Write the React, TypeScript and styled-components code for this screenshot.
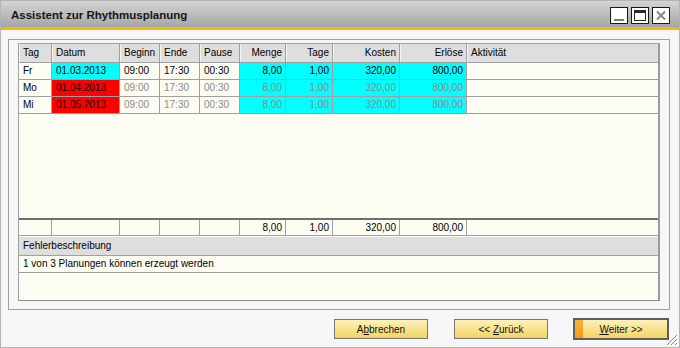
import React from "react";
import styled, { createGlobalStyle } from "styled-components";

const GlobalStyle = createGlobalStyle`
  html, body {
    margin: 0;
    padding: 0;
    background: #ffffff;
  }
  * {
    box-sizing: border-box;
  }
`;

const COLS = "33px 68px 40px 40px 40px 46px 47px 67px 67px 1fr";
const LINE = "#a0a0a0";
const CREAM = "#fdfdf3";

const Window = styled.div`
  position: relative;
  width: 680px;
  height: 348px;
  border: 1px solid #b4b4b4;
  background: #f6f6f6;
  display: flex;
  flex-direction: column;
  font-family: "Liberation Sans", Arial, sans-serif;
  font-size: 10px;
  color: #000;
`;

const TitleBar = styled.div`
  height: 26px;
  flex: none;
  display: flex;
  align-items: center;
  justify-content: space-between;
  padding: 0 9px 0 10px;
  background: linear-gradient(#d4d4d4, #a6a6a6);
  border-bottom: 3px solid #f7b80c;
  box-sizing: content-box;
`;

const Title = styled.div`
  font-size: 11.5px;
  font-weight: bold;
  color: #161616;
  padding-top: 1px;
`;

const TitleButtons = styled.div`
  display: flex;
  gap: 3px;
  padding-top: 2px;
`;

const TitleButton = styled.div`
  width: 18px;
  height: 17px;
  border: 1px solid #1a1a1a;
  background: #fff;
  display: flex;
  align-items: center;
  justify-content: center;
`;

const Body = styled.div`
  flex: 1;
  display: flex;
  flex-direction: column;
  padding: 9px 9px 0 7px;
`;

const Frame = styled.div`
  border: 1px solid ${LINE};
  padding: 3px 9px 8px 9px;
`;

const Grid = styled.div`
  height: 258px;
  background: ${CREAM};
  border-top: 1px solid ${LINE};
  border-left: 1px solid ${LINE};
  border-right: 2px solid #9a9a9a;
  border-bottom: 1px solid #8c8c8c;
  display: flex;
  flex-direction: column;
`;

const HeaderRow = styled.div`
  display: grid;
  grid-template-columns: ${COLS};
  height: 19px;
  flex: none;
  background: #dedede;
  border-bottom: 1px solid ${LINE};
`;

const HeaderCell = styled.div<{ $right?: boolean }>`
  padding: 0 3px 0 4px;
  line-height: 18px;
  text-align: ${(p) => (p.$right ? "right" : "left")};
  border-right: 1px solid ${LINE};
  box-shadow: inset 1px 0 0 #f4f4f4;
  white-space: nowrap;
  overflow: hidden;
  &:last-child {
    border-right: none;
  }
`;

const Row = styled.div<{ $h?: number }>`
  display: grid;
  grid-template-columns: ${COLS};
  height: ${(p) => p.$h ?? 17}px;
  flex: none;
  border-bottom: 1px solid ${LINE};
`;

const Cell = styled.div<{ $right?: boolean; $bg?: string; $dim?: boolean }>`
  padding: 0 3px 0 4px;
  line-height: 16px;
  text-align: ${(p) => (p.$right ? "right" : "left")};
  background: ${(p) => p.$bg ?? "transparent"};
  color: ${(p) => (p.$dim ? "#8a8a8a" : "#000")};
  border-right: 1px solid ${LINE};
  white-space: nowrap;
  &:last-child {
    border-right: none;
  }
`;

const Filler = styled.div<{ $h: number }>`
  height: ${(p) => p.$h}px;
  flex: none;
`;

const Separator = styled.div`
  height: 2px;
  flex: none;
  background: #6e6e6e;
`;

const Gap = styled.div`
  height: 1px;
  flex: none;
  background: #ffffff;
`;

const SectionHeader = styled.div`
  height: 19px;
  flex: none;
  background: #dedede;
  border-bottom: 1px solid ${LINE};
  padding-left: 4px;
  line-height: 18px;
`;

const Message = styled.div`
  height: 17px;
  flex: none;
  border-bottom: 1px solid ${LINE};
  padding-left: 4px;
  line-height: 16px;
`;

const ButtonBar = styled.div`
  display: flex;
  justify-content: flex-end;
  align-items: center;
  gap: 26px;
  margin-top: 8px;
  height: 22px;
  padding-right: 1px;
`;

const Button = styled.div<{ $primary?: boolean }>`
  position: relative;
  width: ${(p) => (p.$primary ? 96 : 94)}px;
  height: ${(p) => (p.$primary ? 22 : 20)}px;
  margin-left: ${(p) => (p.$primary ? -1 : 0)}px;
  border: ${(p) => (p.$primary ? "2px solid #5e5e5e" : "1px solid #767676")};
  background: linear-gradient(#fcf1ba, #f4d465);
  display: flex;
  align-items: center;
  justify-content: center;
  font-size: 10px;
  color: #111;
  u {
    text-decoration: underline;
    text-underline-offset: 1px;
  }
`;

const OrangeStrip = styled.div`
  position: absolute;
  left: 0;
  top: 0;
  bottom: 0;
  width: 8px;
  background: linear-gradient(#f8b23c, #f39a1a);
`;

const Grip = styled.svg`
  position: absolute;
  right: 1px;
  bottom: 1px;
`;

type Plan = {
  tag: string;
  datum: string;
  datumBg: string;
  dim: boolean;
};

const plans: Plan[] = [
  { tag: "Fr", datum: "01.03.2013", datumBg: "#00ffff", dim: false },
  { tag: "Mo", datum: "01.04.2013", datumBg: "#ff0000", dim: true },
  { tag: "Mi", datum: "01.05.2013", datumBg: "#ff0000", dim: true },
];

const CYAN = "#00ffff";

export default function App() {
  return (
    <>
      <GlobalStyle />
      <Window>
        <TitleBar>
          <Title>Assistent zur Rhythmusplanung</Title>
          <TitleButtons>
            <TitleButton>
              <svg width="16" height="15" viewBox="0 0 16 15">
                <rect x="3" y="11" width="10" height="2" fill="#7a7a7a" />
              </svg>
            </TitleButton>
            <TitleButton>
              <svg width="16" height="15" viewBox="0 0 16 15">
                <rect x="2.5" y="2.5" width="11" height="10" fill="none" stroke="#2a2a2a" />
                <rect x="2" y="2" width="12" height="3" fill="#2a2a2a" />
              </svg>
            </TitleButton>
            <TitleButton>
              <svg width="16" height="15" viewBox="0 0 16 15">
                <path d="M4 3.5 L12 11.5 M12 3.5 L4 11.5" stroke="#8a8a8a" strokeWidth="2" />
              </svg>
            </TitleButton>
          </TitleButtons>
        </TitleBar>

        <Body>
          <Frame>
            <Grid>
              <HeaderRow>
                <HeaderCell>Tag</HeaderCell>
                <HeaderCell>Datum</HeaderCell>
                <HeaderCell>Beginn</HeaderCell>
                <HeaderCell>Ende</HeaderCell>
                <HeaderCell>Pause</HeaderCell>
                <HeaderCell $right>Menge</HeaderCell>
                <HeaderCell $right>Tage</HeaderCell>
                <HeaderCell $right>Kosten</HeaderCell>
                <HeaderCell $right>Erlöse</HeaderCell>
                <HeaderCell>Aktivität</HeaderCell>
              </HeaderRow>

              {plans.map((p) => (
                <Row key={p.datum}>
                  <Cell>{p.tag}</Cell>
                  <Cell $bg={p.datumBg}>{p.datum}</Cell>
                  <Cell $dim={p.dim}>09:00</Cell>
                  <Cell $dim={p.dim}>17:30</Cell>
                  <Cell $dim={p.dim}>00:30</Cell>
                  <Cell $right $bg={CYAN} $dim={p.dim}>8,00</Cell>
                  <Cell $right $bg={CYAN} $dim={p.dim}>1,00</Cell>
                  <Cell $right $bg={CYAN} $dim={p.dim}>320,00</Cell>
                  <Cell $right $bg={CYAN} $dim={p.dim}>800,00</Cell>
                  <Cell />
                </Row>
              ))}

              <Filler $h={104} />
              <Separator />
              <Row $h={16}>
                <Cell />
                <Cell />
                <Cell />
                <Cell />
                <Cell />
                <Cell $right>8,00</Cell>
                <Cell $right>1,00</Cell>
                <Cell $right>320,00</Cell>
                <Cell $right>800,00</Cell>
                <Cell />
              </Row>
              <Gap />
              <SectionHeader>Fehlerbeschreibung</SectionHeader>
              <Message>1 von 3 Planungen können erzeugt werden</Message>
            </Grid>
          </Frame>

          <ButtonBar>
            <Button>
              <span>
                A<u>b</u>brechen
              </span>
            </Button>
            <Button>
              <span>
                &lt;&lt; <u>Z</u>urück
              </span>
            </Button>
            <Button $primary>
              <OrangeStrip />
              <span>
                <u>W</u>eiter &gt;&gt;
              </span>
            </Button>
          </ButtonBar>
        </Body>

        <Grip width="14" height="14" viewBox="0 0 14 14">
          <path d="M13 3 L3 13 M13 7 L7 13 M13 11 L11 13" stroke="#8a8a8a" strokeWidth="1" />
          <path d="M14 4 L4 14 M14 8 L8 14 M14 12 L12 14" stroke="#ffffff" strokeWidth="1" />
        </Grip>
      </Window>
    </>
  );
}
